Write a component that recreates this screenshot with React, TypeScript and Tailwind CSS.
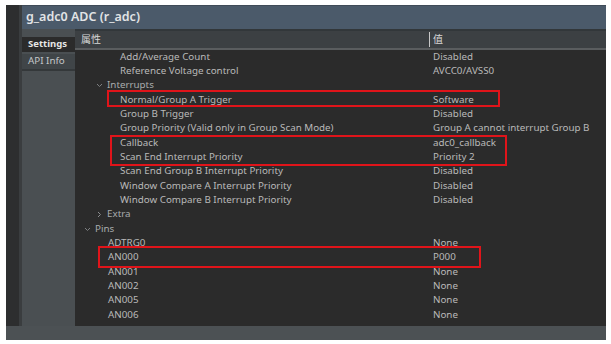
type Row = {
  label: string;
  value?: string;
  indent: number;
  chevron?: "down" | "right";
};

const rows: Row[] = [
  { label: "Add/Average Count", value: "Disabled", indent: 45 },
  { label: "Reference Voltage control", value: "AVCC0/AVSS0", indent: 45 },
  { label: "Interrupts", indent: 32, chevron: "down" },
  { label: "Normal/Group A Trigger", value: "Software", indent: 45 },
  { label: "Group B Trigger", value: "Disabled", indent: 45 },
  { label: "Group Priority (Valid only in Group Scan Mode)", value: "Group A cannot interrupt Group B", indent: 45 },
  { label: "Callback", value: "adc0_callback", indent: 45 },
  { label: "Scan End Interrupt Priority", value: "Priority 2", indent: 45 },
  { label: "Scan End Group B Interrupt Priority", value: "Disabled", indent: 45 },
  { label: "Window Compare A Interrupt Priority", value: "Disabled", indent: 45 },
  { label: "Window Compare B Interrupt Priority", value: "Disabled", indent: 45 },
  { label: "Extra", indent: 32, chevron: "right" },
  { label: "Pins", indent: 20, chevron: "down" },
  { label: "ADTRG0", value: "None", indent: 33 },
  { label: "AN000", value: "P000", indent: 33 },
  { label: "AN001", value: "None", indent: 33 },
  { label: "AN002", value: "None", indent: 33 },
  { label: "AN005", value: "None", indent: 33 },
  { label: "AN006", value: "None", indent: 33 },
];

const Chevron = ({ dir }: { dir: "down" | "right" }) => (
  <svg width="7" height="7" viewBox="0 0 7 7" className="absolute -left-[11px] top-[4px]">
    {dir === "down" ? (
      <path d="M1 2 L3.5 4.5 L6 2" stroke="#7d7f81" strokeWidth="1" fill="none" />
    ) : (
      <path d="M2 1 L4.5 3.5 L2 6" stroke="#8a8c8e" strokeWidth="1" fill="none" />
    )}
  </svg>
);

export default function App() {
  return (
    <div
      className="w-[611px] h-[344px] bg-white pt-[5px] pl-[6px] pr-[5px] pb-[4px]"
      style={{ fontFamily: "'Noto Sans', 'Noto Sans CJK SC', sans-serif" }}
    >
      <div className="flex flex-col w-[600px] h-[335px]">
        <div className="flex h-[321px]">
          <div className="w-[13px] bg-[#2d2e2f]" />
          <div className="w-[3px] bg-[#3a3d3f]" />
          <div className="flex flex-col w-[584px]">
            <div className="h-[24px] bg-[#4b5a6a] border-t border-[#3f4b58] flex items-center pl-[4px] text-[12.5px] font-semibold text-[#e2e4e6]">
              g_adc0 ADC (r_adc)
            </div>
            <div className="flex flex-1">
              <div className="w-[53px] bg-[#4a4f52] pt-[8px] flex flex-col">
                <div className="h-[15px] bg-[#2b2b2b] flex items-center pl-[6px] text-[9.5px] font-bold text-[#e6e6e6]">
                  Settings
                </div>
                <div className="h-[2px]" />
                <div className="h-[17px] bg-[#404548] border-b-2 border-[#34383a] flex items-center pl-[6px] text-[9.8px] text-[#c4c7c9]">
                  API Info
                </div>
              </div>
              <div className="relative flex-1 flex flex-col bg-[#2b2b2b]">
                <div className="h-[2px] bg-[#32373a]" />
                <div className="h-[19px] bg-[#3c4043] border-b-2 border-[#5a5d5f] flex text-[10px] text-[#d8d8d8]">
                  <div className="w-[354px] pl-[6px] flex items-center">属性</div>
                  <div className="w-px bg-[#c8c8c8] my-[1px]" />
                  <div className="pl-[3px] flex items-center">值</div>
                </div>
                <div className="flex flex-col text-[9.8px] text-[#b9b9b9]">
                  {rows.map((r) => (
                    <div key={r.label} className="h-[14.33px] flex items-center whitespace-nowrap">
                      <div className="w-[358px] relative" style={{ paddingLeft: r.indent }}>
                        <span className="relative">
                          {r.chevron && <Chevron dir={r.chevron} />}
                          <span className={r.chevron ? "text-[#a9abad]" : ""}>{r.label}</span>
                        </span>
                      </div>
                      <div>{r.value}</div>
                    </div>
                  ))}
                </div>
                <div className="absolute left-[32px] top-[61px] w-[393px] h-[17px] border-2 border-[#e0141a]" />
                <div className="absolute left-[35px] top-[106px] w-[397px] h-[31px] border-2 border-[#e0141a]" />
                <div className="absolute left-[23px] top-[217px] w-[383px] h-[22px] border-2 border-[#e0141a]" />
              </div>
            </div>
          </div>
        </div>
        <div className="h-[14px] bg-[#4c5154]" />
      </div>
    </div>
  );
}
